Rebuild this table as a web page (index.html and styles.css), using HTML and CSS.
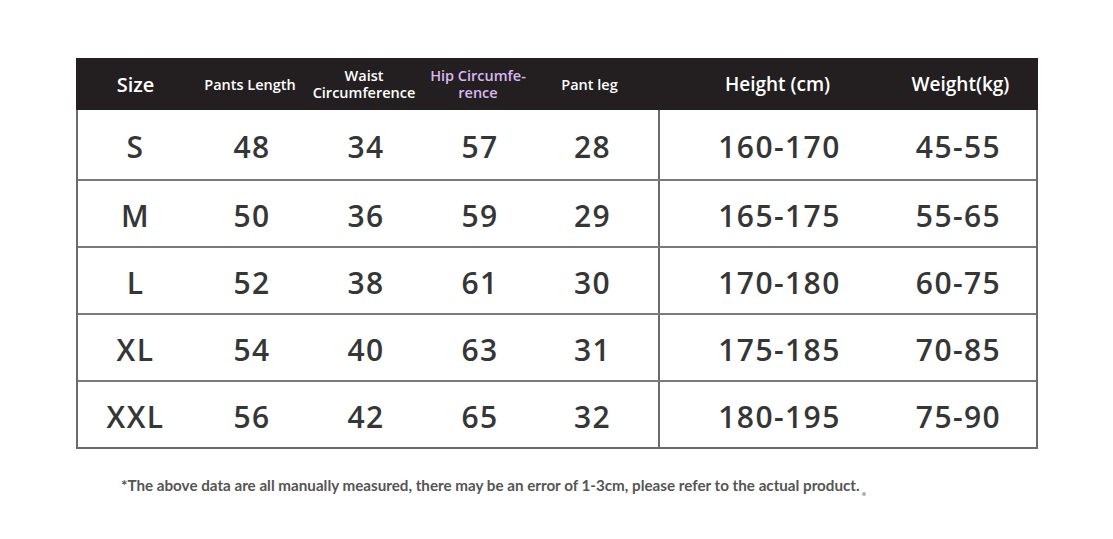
FILE: index.html
```
<!DOCTYPE html>
<html>
<head>
<meta charset="utf-8">
<link rel="stylesheet" href="styles.css">
</head>
<body>
<div class="page">
  <div class="chart">
    <div class="row head">
      <div class="c c1 h-big">Size</div>
      <div class="c c2 h-small">Pants Length</div>
      <div class="c c3 h-small">Waist<br>Circumference</div>
      <div class="c c4 h-small hip">Hip Circumfe-<br>rence</div>
      <div class="c c5 h-small">Pant leg</div>
      <div class="c c6 h-mid">Height (cm)</div>
      <div class="c c7 h-mid">Weight(kg)</div>
    </div>
    <div class="row body first">
      <div class="c c1">S</div><div class="c c2">48</div><div class="c c3">34</div><div class="c c4">57</div><div class="c c5">28</div><div class="c c6">160-170</div><div class="c c7">45-55</div>
    </div>
    <div class="row body">
      <div class="c c1">M</div><div class="c c2">50</div><div class="c c3">36</div><div class="c c4">59</div><div class="c c5">29</div><div class="c c6">165-175</div><div class="c c7">55-65</div>
    </div>
    <div class="row body">
      <div class="c c1">L</div><div class="c c2">52</div><div class="c c3">38</div><div class="c c4">61</div><div class="c c5">30</div><div class="c c6">170-180</div><div class="c c7">60-75</div>
    </div>
    <div class="row body">
      <div class="c c1">XL</div><div class="c c2">54</div><div class="c c3">40</div><div class="c c4">63</div><div class="c c5">31</div><div class="c c6">175-185</div><div class="c c7">70-85</div>
    </div>
    <div class="row body last">
      <div class="c c1">XXL</div><div class="c c2">56</div><div class="c c3">42</div><div class="c c4">65</div><div class="c c5">32</div><div class="c c6">180-195</div><div class="c c7">75-90</div>
    </div>
  </div>
  <p class="note">*The above data are all manually measured, there may be an error of 1-3cm, please refer to the actual product.<span class="dot"></span></p>
</div>
</body>
</html>
```
FILE: styles.css
```
html, body {
  margin: 0;
  padding: 0;
  background: #ffffff;
}
.page {
  width: 1113px;
  height: 539px;
  padding-top: 58px;
  box-sizing: border-box;
  position: relative;
}
.chart {
  margin-left: 76px;
  width: 962px;
  border: 2px solid #6b6b6b;
  border-top: none;
  box-sizing: border-box;
}
.row {
  display: grid;
  grid-template-columns: 117px 114px 114px 114px 123px 221px 157px;
}
.c {
  display: flex;
  align-items: center;
  justify-content: center;
  text-align: center;
}
.head {
  background: #231f20;
  height: 52px;
  margin: 0 -2px;
  color: #ffffff;
  font-family: "Open Sans", "Noto Sans", sans-serif;
  font-weight: 600;
}
.head .c1 { padding-left: 2px; }
.h-big { font-size: 20px; }
.h-small { font-size: 14.5px; line-height: 17px; }
.h-mid { font-size: 19px; }
.head .c4 { color: #d9b7f0; }
.head .c5 { padding-right: 14px; }
.head .c6 { padding-left: 18px; }
.head .c7 { padding-left: 6px; }
.body {
  height: 67px;
  border-top: 2px solid #7a7a7a;
  box-sizing: border-box;
  font-family: "Open Sans", "Noto Sans", sans-serif;
  font-size: 30px;
  font-weight: 600;
  letter-spacing: 1.4px;
  color: #363636;
}
.body .c { padding-top: 3px; }
.body.first {
  height: 69px;
  border-top: none;
}
.body .c1 { padding-right: 2px; }
.body .c5 { padding-right: 10px; border-right: 2px solid #6b6b6b; }
.body .c6 { padding-left: 18px; }
.body .c7 { padding-right: 2px; }
.note {
  margin: 27px 0 0 121px;
  font-family: "Lato", "Liberation Sans", sans-serif;
  font-weight: 700;
  font-size: 15.2px;
  color: #555555;
}
.dot {
  display: inline-block;
  width: 4px;
  height: 4px;
  border-radius: 50%;
  background: #b0b0b0;
  margin-left: 2px;
  vertical-align: -5px;
}
```
